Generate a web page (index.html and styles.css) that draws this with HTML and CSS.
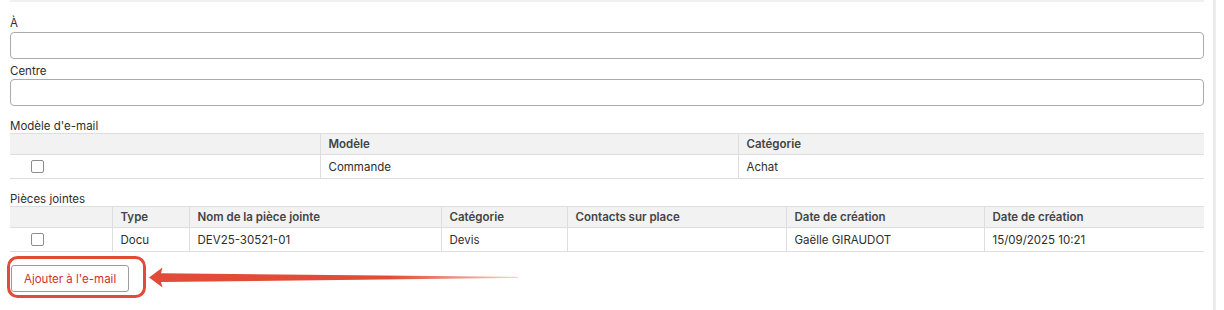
FILE: index.html
```html
<!DOCTYPE html>
<html>
<head>
    <title>Envoyer par e-mail</title>
    <link rel="stylesheet" href="styles.css">
</head>
<body>
<div class="panel">
    <div class="top-edge"></div>

    <label class="field-label first" for="to">À</label>
    <input class="text-input" type="text" id="to" name="to">

    <label class="field-label" for="centre">Centre</label>
    <input class="text-input second" type="text" id="centre" name="centre">

    <div class="section-label">Modèle d'e-mail</div>
    <table class="grid">
        <colgroup>
            <col style="width:310px"><col style="width:418px"><col style="width:466px">
        </colgroup>
        <tr>
            <th></th>
            <th>Modèle</th>
            <th>Catégorie</th>
        </tr>
        <tr>
            <td class="check"><input type="checkbox"></td>
            <td>Commande</td>
            <td>Achat</td>
        </tr>
    </table>

    <div class="section-label">Pièces jointes</div>
    <table class="grid">
        <colgroup>
            <col style="width:102px"><col style="width:77px"><col style="width:252px"><col style="width:126px">
            <col style="width:219px"><col style="width:198px"><col style="width:220px">
        </colgroup>
        <tr>
            <th></th>
            <th>Type</th>
            <th>Nom de la pièce jointe</th>
            <th>Catégorie</th>
            <th>Contacts sur place</th>
            <th>Date de création</th>
            <th>Date de création</th>
        </tr>
        <tr>
            <td class="check"><input type="checkbox"></td>
            <td>Docu</td>
            <td>DEV25-30521-01</td>
            <td>Devis</td>
            <td></td>
            <td>Gaëlle GIRAUDOT</td>
            <td>15/09/2025 10:21</td>
        </tr>
    </table>

    <div class="actions">
        <button class="add-btn" type="button">Ajouter à l'e-mail</button>
    </div>

    <!-- annotation drawn over the button -->
    <svg class="callout" width="530" height="55" viewBox="0 0 530 55">
        <defs>
            <linearGradient id="fade" x1="149" y1="0" x2="518" y2="0" gradientUnits="userSpaceOnUse">
                <stop offset="0" stop-color="#e14b37"/>
                <stop offset="0.65" stop-color="#e14b37"/>
                <stop offset="1" stop-color="#e14b37" stop-opacity="0.25"/>
            </linearGradient>
        </defs>
        <rect x="8.5" y="7.5" width="136" height="39" rx="9" fill="none" stroke="#e14b37" stroke-width="3"/>
        <path d="M149 27.5 L162.5 17.5 L161 23.2 L518 26.8 L518 27.9 L161 32 L162.5 37.5 Z" fill="url(#fade)"/>
    </svg>
</div>
</body>
</html>
```

FILE: styles.css
```css
body {
    margin: 0;
    font-family: Inter, "Liberation Sans", sans-serif;
    font-size: 11.5px;
    color: #2e2e2e;
    background: #fff;
}
.panel {
    position: relative;
    box-sizing: border-box;
    width: 1216px;
    min-height: 310px;
    padding: 0 9px 0 10px;
    border-right: 3px solid #ececec;
}
.top-edge {
    height: 2px;
    background: #f0f0f0;
}
.field-label {
    display: block;
    margin-top: 5px;
    line-height: 14px;
}
.field-label.first {
    margin-top: 14px;
}
.text-input {
    display: block;
    box-sizing: border-box;
    width: 100%;
    height: 27px;
    margin: 2px 0 0;
    border: 1px solid #ababab;
    border-radius: 4px;
    background: #fff;
}
.text-input.second {
    margin-top: 1px;
}
.section-label {
    margin-top: 14px;
    line-height: 13px;
}
.grid {
    width: 100%;
    table-layout: fixed;
    border-collapse: collapse;
}
.grid th, .grid td {
    padding: 0 8px;
    text-align: left;
    border-top: 1px solid #dedede;
    border-bottom: 1px solid #dedede;
    border-left: 1px solid #dedede;
    white-space: nowrap;
}
.grid th:first-child, .grid td:first-child {
    border-left: none;
}
.grid th {
    height: 20px;
    background: #f2f2f2;
    font-weight: 600;
    color: #444;
}
.grid td {
    height: 23px;
}
.grid td.check {
    padding-left: 21px;
}
.grid input[type="checkbox"] {
    appearance: none;
    display: block;
    width: 13px;
    height: 13px;
    margin: 0;
    border: 1px solid #8d8d8d;
    border-radius: 2px;
    background: #fff;
}
.actions {
    padding-top: 13px;
}
.add-btn {
    height: 27px;
    margin-left: 1px;
    padding: 0 12px;
    border: 1px solid #9c9c9c;
    border-radius: 3px;
    background: #fff;
    color: #d0312d;
    font-family: inherit;
    font-size: 11.5px;
}
.callout {
    position: absolute;
    left: 0;
    top: 250px;
}
```
